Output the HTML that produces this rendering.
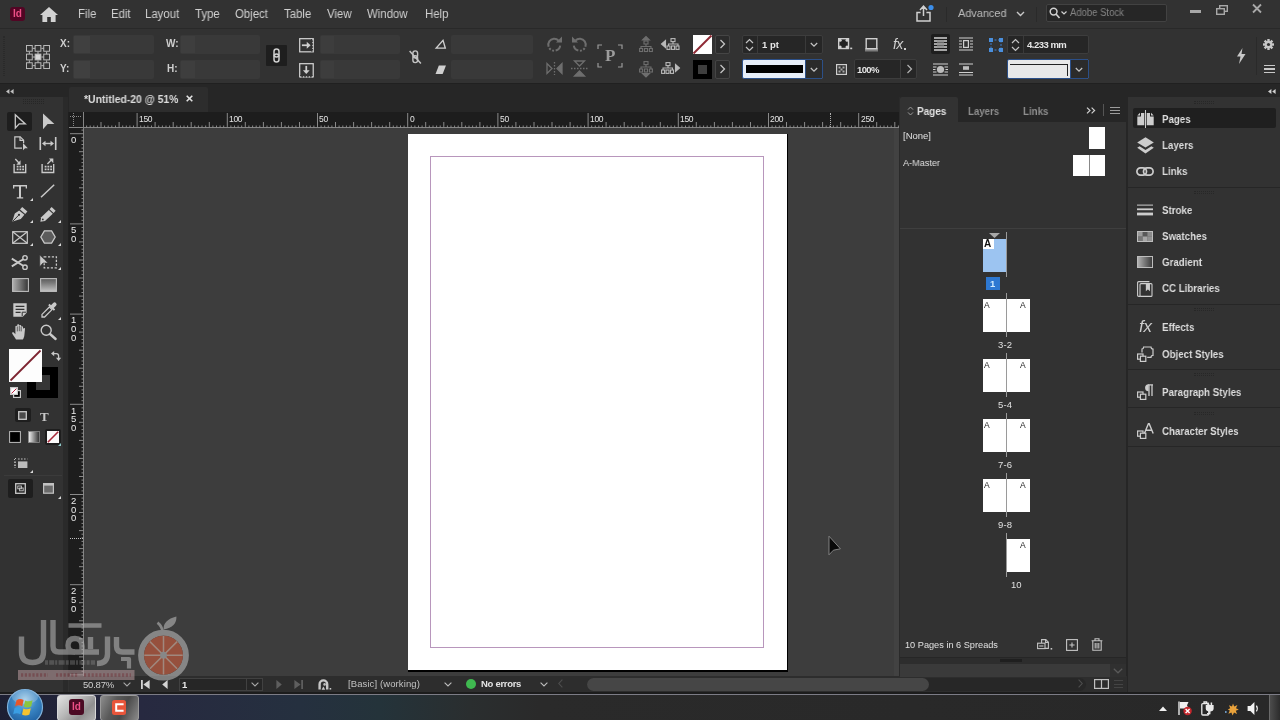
<!DOCTYPE html>
<html><head><meta charset="utf-8">
<style>
*{box-sizing:border-box;margin:0;padding:0}
html,body{width:1280px;height:720px;overflow:hidden;background:#323232;font-family:"Liberation Sans",sans-serif;color:#d6d6d6;font-size:12px}
.a{position:absolute}
.t{position:absolute;white-space:nowrap;line-height:1;will-change:transform}
svg{position:absolute;overflow:visible}
#menubar{left:0;top:0;width:1280px;height:28px;background:#323232}
#menubar .t{font-size:12px;top:8px;color:#d0d0d0;transform:scaleX(.95);transform-origin:0 0}
#ctrl{left:0;top:28px;width:1280px;height:55px;background:#323232}
.fld{position:absolute;background:#393939;border-radius:2px}
.dfld{position:absolute;background:#262626;border:1px solid #3d3d3d;border-radius:2px}
#tabrow{left:0;top:83px;width:1280px;height:29px;background:#262626;border-top:1px solid #202020}
#paste{left:84px;top:128px;width:816px;height:549px;background:#3d3d3d}
#hruler{left:84px;top:112px;width:815px;overflow:hidden;height:16px;background:#1d1d1d}
#vruler{left:69px;top:112px;width:15px;height:565px;background:#1d1d1d}
#toolbox{left:0;top:97px;width:63px;height:598px;background:#323232}
#pagespanel{left:900px;top:97px;width:226px;height:567px;background:#323232}
#dock{left:1128px;top:97px;width:152px;height:598px;background:#323232}
#dock .t{font-size:11.5px;font-weight:bold;color:#dcdcdc;left:34px;transform:scaleX(.845);transform-origin:0 0}
#status{left:69px;top:676px;width:1058px;height:17px;background:#2d2d2d}
#taskbar{left:0;top:695px;width:1280px;height:25px;background:#272727}
</style></head><body>
<div id="menubar" class="a">
<div class="a" style="left:9.5px;top:6.5px;width:15px;height:14.5px;background:#520524;border-radius:3px"></div>
<div class="t" style="left:12.8px;top:9.2px;font-size:10px;font-weight:bold;color:#ee4f86;letter-spacing:0px;transform:none">Id</div>
<svg style="left:40px;top:7px" width="18" height="15" viewBox="0 0 18 15"><path d="M9 0 L18 8 L15.6 8 L15.6 15 L10.8 15 L10.8 10 L7.2 10 L7.2 15 L2.4 15 L2.4 8 L0 8 Z" fill="#d2d2d2"/></svg>
<div class="t" style="left:78px">File</div>
<div class="t" style="left:111px">Edit</div>
<div class="t" style="left:145px">Layout</div>
<div class="t" style="left:195px">Type</div>
<div class="t" style="left:235px">Object</div>
<div class="t" style="left:284px">Table</div>
<div class="t" style="left:327px">View</div>
<div class="t" style="left:367px">Window</div>
<div class="t" style="left:425px">Help</div>
<svg style="left:916px;top:4px" width="18" height="18" viewBox="0 0 18 18"><path d="M4.6 8.6 H1 V17 H14 V8.6 H10.4 M7.5 12 V2.6 M4 6 L7.5 2.2 L11 6" fill="none" stroke="#d0d0d0" stroke-width="1.5"/><circle cx="15" cy="3.5" r="2.6" fill="#3b8eea"/></svg>
<div class="a" style="left:946px;top:7px;width:1px;height:15px;background:#2a2a2a"></div><div class="a" style="left:1036px;top:7px;width:1px;height:15px;background:#2a2a2a"></div><div class="t" style="left:958px;color:#bdbdbd;font-size:11.5px">Advanced</div>
<svg style="left:1016px;top:11px" width="9" height="6" viewBox="0 0 9 6"><path d="M1 1 L4.5 4.5 L8 1" fill="none" stroke="#c8c8c8" stroke-width="1.4"/></svg>
<div class="a" style="left:1046px;top:4px;width:121px;height:18px;background:#262626;border:1px solid #424242;border-radius:2px"></div>
<svg style="left:1049px;top:7px" width="20" height="12" viewBox="0 0 20 12"><circle cx="4.6" cy="4.6" r="3.4" fill="none" stroke="#d0d0d0" stroke-width="1.5"/><path d="M7 7 L10.5 11" stroke="#d0d0d0" stroke-width="1.7"/><path d="M12.5 4.5 L15 7 L17.5 4.5" fill="none" stroke="#d0d0d0" stroke-width="1.2"/></svg>
<div class="t" style="left:1070px;top:8px;font-size:10px;color:#858585">Adobe Stock</div>
<div class="a" style="left:1190px;top:10px;width:11px;height:3px;background:#a8a8a8"></div>
<svg style="left:1216px;top:5px" width="12" height="10" viewBox="0 0 12 10"><rect x="3.7" y="0.7" width="7.6" height="5.6" fill="none" stroke="#a8a8a8" stroke-width="1.4"/><rect x="0.7" y="3.7" width="7.6" height="5.6" fill="#323232" stroke="#a8a8a8" stroke-width="1.4"/></svg>
<svg style="left:1252px;top:4px" width="10" height="9" viewBox="0 0 10 9"><path d="M1 0.5 L9 8.5 M9 0.5 L1 8.5" stroke="#a8a8a8" stroke-width="1.8"/></svg>
</div>
<div id="ctrl" class="a">
<div class="a" style="left:0;top:0;width:1280px;height:1px;background:#292929"></div>
<div class="a" style="left:3px;top:8px;width:2px;height:40px;border-left:1px dotted #2a2a2a;border-right:1px dotted #2a2a2a"></div>
<svg style="left:26px;top:16.8px" width="24" height="24" viewBox="0 0 25 25" fill="none" stroke="#bdbdbd" stroke-width="1">
<path d="M7 3.5H9.5M16 3.5H18.5M7 12.5H9.5M16 12.5H18.5M7 21.5H9.5M16 21.5H18.5M3.5 7V9.5M3.5 16V18.5M12.5 7V9.5M12.5 16V18.5M21.5 7V9.5M21.5 16V18.5"/>
<rect x="0.5" y="0.5" width="6" height="6"/><rect x="9.5" y="0.5" width="6" height="6"/><rect x="18.5" y="0.5" width="6" height="6"/>
<rect x="0.5" y="9.5" width="6" height="6"/><rect x="9.5" y="9.5" width="6" height="6" fill="#d8d8d8"/><rect x="18.5" y="9.5" width="6" height="6"/>
<rect x="0.5" y="18.5" width="6" height="6"/><rect x="9.5" y="18.5" width="6" height="6"/><rect x="18.5" y="18.5" width="6" height="6"/></svg>
<div class="t" style="left:60px;top:11px;font-size:10px;font-weight:bold;color:#cfcfcf">X:</div>
<div class="t" style="left:60px;top:36px;font-size:10px;font-weight:bold;color:#cfcfcf">Y:</div>
<div class="fld" style="left:73px;top:7px;width:81px;height:19px"></div>
<div class="fld" style="left:73px;top:32px;width:81px;height:18.5px"></div>
<div class="a" style="left:74px;top:8px;width:16px;height:17px;background:#404040"></div>
<div class="a" style="left:74px;top:33px;width:16px;height:16.5px;background:#404040"></div>
<div class="t" style="left:166px;top:11px;font-size:10px;font-weight:bold;color:#cfcfcf">W:</div>
<div class="t" style="left:167px;top:36px;font-size:10px;font-weight:bold;color:#cfcfcf">H:</div>
<div class="fld" style="left:180px;top:7px;width:80px;height:19px"></div>
<div class="fld" style="left:180px;top:32px;width:80px;height:18.5px"></div>
<div class="a" style="left:181px;top:8px;width:14px;height:17px;background:#3e3e3e"></div>
<div class="a" style="left:181px;top:33px;width:14px;height:16.5px;background:#3e3e3e"></div>
<div class="a" style="left:266px;top:17px;width:21px;height:21px;background:#1e1e1e;border-radius:1px"></div>
<svg style="left:272px;top:20px" width="9" height="15" viewBox="0 0 9 15" fill="none" stroke="#cfcfcf" stroke-width="1.5"><rect x="2" y="1" width="5" height="8" rx="2.5"/><rect x="2" y="6" width="5" height="8" rx="2.5"/></svg>
<svg style="left:299px;top:10px" width="15.5" height="14.5" viewBox="0 0 16 15" fill="none" stroke="#cfcfcf"><rect x="0.7" y="0.7" width="14" height="13.6" stroke-width="1.3"/><path d="M13.5 1V14" stroke="#323232" stroke-width="2"/><path d="M14.3 1V14" stroke-dasharray="1.5 1.5" stroke-width="1.2"/><path d="M3 7.5H10" stroke-width="1.8"/><path d="M8 4L12 7.5L8 11Z" fill="#cfcfcf" stroke="none"/></svg>
<svg style="left:299px;top:34.5px" width="15.5" height="14.5" viewBox="0 0 16 15" fill="none" stroke="#cfcfcf"><rect x="0.7" y="0.7" width="14" height="13.6" stroke-width="1.3"/><path d="M1 13.6H14" stroke="#323232" stroke-width="2"/><path d="M1 14.3H14.5" stroke-dasharray="1.5 1.5" stroke-width="1.2"/><path d="M7.5 3V9" stroke-width="1.8"/><path d="M4 7.5L7.5 11.5L11 7.5Z" fill="#cfcfcf" stroke="none"/></svg>
<div class="fld" style="left:320px;top:7px;width:80px;height:19px"></div>
<div class="fld" style="left:320px;top:32px;width:80px;height:18.5px"></div>
<div class="a" style="left:321px;top:8px;width:13px;height:17px;background:#3d3d3d"></div>
<div class="a" style="left:321px;top:33px;width:13px;height:16.5px;background:#3d3d3d"></div>
<svg style="left:408px;top:20.5px" width="14.5" height="16" viewBox="0 0 15 17" fill="none" stroke="#c4c4c4" stroke-width="1.5"><rect x="5" y="2" width="5" height="7.5" rx="2.5"/><rect x="5" y="7" width="5" height="7.5" rx="2.5"/><path d="M1.5 2L13.5 15.5" stroke-width="1.6"/></svg>
<svg style="left:435px;top:10.5px" width="11.5" height="10" viewBox="0 0 12 11" fill="none" stroke="#cfcfcf" stroke-width="1.5"><path d="M1 10H11L8.5 1.5Z" stroke-linejoin="miter"/></svg>
<svg style="left:435px;top:37px" width="11.5" height="9.5" viewBox="0 0 12 10"><path d="M0.5 9.5L4 0.5H11.5L8 9.5Z" fill="#cfcfcf"/></svg>
<div class="fld" style="left:451px;top:7px;width:82px;height:19px"></div>
<div class="fld" style="left:451px;top:32px;width:82px;height:18.5px"></div>
<!-- rotate / flip (disabled) -->
<svg style="left:546px;top:8px" width="17" height="16" viewBox="0 0 17 16" fill="none" stroke="#6e6e6e" stroke-width="2"><path d="M12.6 4.6A6 6 0 1 0 14.2 9.6" stroke-dasharray="16 1.6 2 1.6 2 1.6 20"/><path d="M10 6.5H16V0.5Z" fill="#6e6e6e" stroke="none"/></svg>
<svg style="left:571px;top:8px" width="17" height="16" viewBox="0 0 17 16" fill="none" stroke="#6e6e6e" stroke-width="2"><path d="M4.4 4.6A6 6 0 1 1 2.8 9.6" stroke-dasharray="16 1.6 2 1.6 2 1.6 20"/><path d="M7 6.5H1V0.5Z" fill="#6e6e6e" stroke="none"/></svg>
<svg style="left:546px;top:34px" width="17" height="13" viewBox="0 0 17 13" fill="none" stroke="#6e6e6e" stroke-width="1.3"><path d="M1 1.5V11.5L6 6.5Z"/><path d="M16 1.5V11.5L11 6.5Z" fill="#6e6e6e"/><path d="M8.5 0V13" stroke-dasharray="1.5 1.5"/></svg>
<svg style="left:571px;top:32px" width="17" height="17" viewBox="0 0 17 17" fill="none" stroke="#6e6e6e" stroke-width="1.3"><path d="M3.5 1H13.5L8.5 6Z"/><path d="M3.5 16H13.5L8.5 11Z" fill="#6e6e6e"/><path d="M0 8.5H17" stroke-dasharray="1.5 1.5"/></svg>
<!-- P box -->
<svg style="left:597px;top:16px" width="26" height="24" viewBox="0 0 26 24" fill="none" stroke="#9a9a9a" stroke-width="1.2"><path d="M1 5V1H5M21 1H25V5M25 19V23H21M5 23H1V19"/></svg>
<div class="t" style="left:605px;top:19px;font-family:'Liberation Serif',serif;font-size:17px;font-weight:bold;color:#9c9c9c">P</div>
<!-- select container/content -->
<svg style="left:639px;top:8px" width="14" height="16" viewBox="0 0 14 16" fill="none" stroke="#6e6e6e" stroke-width="1.1"><path d="M3.5 4L7 0.5L10.5 4Z" fill="#6e6e6e"/><rect x="5" y="5" width="4" height="3"/><path d="M7 8V10.5M2 12.5V10.5H12V12.5"/><rect x="0.6" y="12.5" width="3" height="3"/><rect x="5.5" y="12.5" width="3" height="3"/><rect x="10.4" y="12.5" width="3" height="3"/></svg>
<svg style="left:639px;top:33px" width="14" height="17" viewBox="0 0 14 17" fill="none" stroke="#6e6e6e" stroke-width="1.1"><rect x="5" y="0.6" width="4" height="3"/><path d="M7 3.6V6M2 8V6H12V8"/><rect x="0.6" y="8" width="3" height="3"/><rect x="5.5" y="8" width="3" height="3"/><rect x="10.4" y="8" width="3" height="3"/><path d="M3.5 12.5L7 16L10.5 12.5Z" fill="#6e6e6e"/></svg>
<svg style="left:661px;top:10px" width="19" height="13" viewBox="0 0 19 13" fill="none" stroke="#b8b8b8" stroke-width="1.1"><path d="M4.5 2.5V9.5L0.5 6Z" fill="#b8b8b8"/><rect x="10" y="0.6" width="4" height="3"/><path d="M12 3.6V6M7.5 8V6H17V8"/><rect x="6" y="8" width="3" height="3.4"/><rect x="10.5" y="8" width="3" height="3.4"/><rect x="15" y="8" width="3" height="3.4"/></svg>
<svg style="left:661px;top:34px" width="19" height="13" viewBox="0 0 19 13" fill="none" stroke="#b8b8b8" stroke-width="1.1"><path d="M14.5 2.5V9.5L18.5 6Z" fill="#b8b8b8"/><rect x="5" y="0.6" width="4" height="3"/><path d="M7 3.6V6M2 8V6H11.5V8"/><rect x="0.6" y="8" width="3" height="3.4"/><rect x="5" y="8" width="3" height="3.4"/><rect x="9.5" y="8" width="3" height="3.4"/></svg>
<!-- fill / stroke swatches -->
<svg style="left:693px;top:7px" width="19" height="19" viewBox="0 0 19 19"><rect width="19" height="19" fill="#fff"/><path d="M0.5 18.5L18.5 0.5" stroke="#8f2a35" stroke-width="2"/></svg>
<div class="a" style="left:715px;top:7px;width:15px;height:19px;border:1px solid #454545;background:#2b2b2b;border-radius:2px"></div>
<svg style="left:719px;top:11px" width="7" height="10" viewBox="0 0 7 10"><path d="M1.5 1L5.5 5L1.5 9" fill="none" stroke="#c4c4c4" stroke-width="1.3"/></svg>
<div class="a" style="left:693px;top:32px;width:19px;height:18.5px;background:#000"></div>
<div class="a" style="left:698px;top:37px;width:9px;height:9px;background:#3e3e3e"></div>
<div class="a" style="left:715px;top:32px;width:15px;height:18.5px;border:1px solid #454545;background:#2b2b2b;border-radius:2px"></div>
<svg style="left:719px;top:36px" width="7" height="10" viewBox="0 0 7 10"><path d="M1.5 1L5.5 5L1.5 9" fill="none" stroke="#c4c4c4" stroke-width="1.3"/></svg>
<!-- stroke weight -->
<div class="dfld" style="left:742px;top:7px;width:81px;height:19px"></div>
<div class="a" style="left:757px;top:8px;width:1px;height:17px;background:#3a3a3a"></div>
<div class="a" style="left:805px;top:8px;width:1px;height:17px;background:#3a3a3a"></div>
<svg style="left:745px;top:10px" width="9" height="14" viewBox="0 0 9 14" fill="none" stroke="#c4c4c4" stroke-width="1.2"><path d="M1 5L4.5 1.5L8 5M1 9L4.5 12.5L8 9"/></svg>
<div class="t" style="left:761.5px;top:11.5px;font-size:9.5px;font-weight:bold;color:#e6e6e6">1 pt</div>
<svg style="left:810px;top:14px" width="8" height="6" viewBox="0 0 8 6"><path d="M0.8 1L4 4.2L7.2 1" fill="none" stroke="#c4c4c4" stroke-width="1.2"/></svg>
<!-- stroke type -->
<div class="a" style="left:742px;top:31px;width:81px;height:20px;background:#e6edf8;border:1px solid #2b4f88;border-radius:2px"></div>
<div class="a" style="left:746px;top:37px;width:57px;height:8px;background:#000"></div>
<div class="a" style="left:805px;top:32px;width:17px;height:18px;background:#2b2b2b;border-left:1px solid #2b4f88"></div>
<svg style="left:810px;top:39px" width="8" height="6" viewBox="0 0 8 6"><path d="M0.8 1L4 4.2L7.2 1" fill="none" stroke="#c4c4c4" stroke-width="1.2"/></svg>
<!-- corner opts, shadow, fx -->
<svg style="left:837.5px;top:10px" width="15" height="12" viewBox="0 0 15 12"><rect x="0.7" y="0.7" width="9.8" height="9.8" fill="#222" stroke="#cfcfcf" stroke-width="1.4"/><circle cx="2.2" cy="2.2" r="1.5" fill="#cfcfcf"/><circle cx="9" cy="2.2" r="1.5" fill="#cfcfcf"/><circle cx="2.2" cy="9" r="1.5" fill="#cfcfcf"/><circle cx="9" cy="9" r="1.5" fill="#cfcfcf"/><rect x="12.2" y="9.6" width="2" height="1.6" fill="#cfcfcf"/></svg>
<svg style="left:865px;top:10px" width="13" height="14" viewBox="0 0 13 14"><rect x="0" y="10" width="13" height="3.5" fill="#7d7d7d"/><rect x="1.2" y="0.7" width="10.6" height="10" fill="#323232" stroke="#cfcfcf" stroke-width="1.4"/></svg>
<div class="t" style="left:892.5px;top:8.5px;font-style:italic;font-size:14px;color:#cfcfcf;letter-spacing:-0.6px">fx</div>
<div class="a" style="left:904px;top:20px;width:2px;height:1.6px;background:#cfcfcf"></div>
<!-- opacity -->
<svg style="left:836px;top:36px" width="11" height="11" viewBox="0 0 11 11"><rect x="0.6" y="0.6" width="9.8" height="9.8" fill="none" stroke="#cfcfcf" stroke-width="1.2"/><rect x="2.5" y="2.5" width="2" height="2" fill="#aaa"/><rect x="6.5" y="2.5" width="2" height="2" fill="#aaa"/><rect x="4.5" y="4.5" width="2" height="2" fill="#aaa"/><rect x="2.5" y="6.5" width="2" height="2" fill="#aaa"/><rect x="6.5" y="6.5" width="2" height="2" fill="#aaa"/></svg>
<div class="dfld" style="left:854px;top:31px;width:63px;height:20px"></div>
<div class="a" style="left:900px;top:32px;width:1px;height:18px;background:#3d3d3d"></div>
<div class="t" style="left:857px;top:36.5px;font-size:9.5px;font-weight:bold;letter-spacing:-0.6px;color:#e6e6e6">100%</div>
<svg style="left:906px;top:36px" width="7" height="10" viewBox="0 0 7 10"><path d="M1.5 1L5.5 5L1.5 9" fill="none" stroke="#b4b4b4" stroke-width="1.2"/></svg>
<!-- text wrap -->
<div class="a" style="left:931px;top:6px;width:19px;height:20px;background:#1e1e1e;border-radius:2px"></div>
<svg style="left:934px;top:9px" width="13" height="14" viewBox="0 0 13 14" stroke="#d2d2d2" stroke-width="1.3"><path d="M0 1H13M0 13H13M0 4H13M0 7H13M0 10H13"/><rect x="3" y="3" width="7" height="8" fill="#8f8f8f" stroke="none" opacity="0.65"/></svg>
<svg style="left:959px;top:9px" width="14" height="14" viewBox="0 0 14 14" stroke="#cfcfcf" stroke-width="1.2" fill="none"><path d="M0 1H14M0 13H14M0 4H3M0 7H3M0 10H3M11 4H14M11 7H14M11 10H14"/><rect x="4.6" y="3.6" width="4.8" height="6.8"/></svg>
<svg style="left:933px;top:35px" width="15" height="13" viewBox="0 0 15 13" stroke="#cfcfcf" stroke-width="1.2" fill="none"><path d="M0 1H15M0 12H15M0 4H3.5M0 6.5H2.5M0 9H3.5M11.5 4H15M12.5 6.5H15M11.5 9H15"/><circle cx="7.5" cy="6.5" r="3.6" fill="#bdbdbd" stroke="none"/></svg>
<svg style="left:959px;top:35px" width="14" height="13" viewBox="0 0 14 13" stroke="#cfcfcf" stroke-width="1.2" fill="none"><path d="M0 1H14M0 9.5H14M0 12H14"/><rect x="4" y="3.2" width="6" height="3.6" fill="#bdbdbd" stroke="none"/></svg>
<!-- corner size -->
<svg style="left:989px;top:10px" width="14" height="14" viewBox="0 0 14 14"><path d="M2 2H12V12H2Z" fill="none" stroke="#3d7fce" stroke-width="1" stroke-dasharray="2 1.5"/><rect x="0" y="0" width="4" height="4" fill="#4a8fdd"/><rect x="10" y="0" width="4" height="4" fill="#4a8fdd"/><rect x="0" y="10" width="4" height="4" fill="#4a8fdd"/><rect x="10" y="10" width="4" height="4" fill="#4a8fdd"/></svg>
<div class="dfld" style="left:1007px;top:7px;width:82px;height:19px"></div>
<div class="a" style="left:1023px;top:8px;width:1px;height:17px;background:#3a3a3a"></div>
<svg style="left:1011px;top:10px" width="9" height="14" viewBox="0 0 9 14" fill="none" stroke="#c4c4c4" stroke-width="1.2"><path d="M1 5L4.5 1.5L8 5M1 9L4.5 12.5L8 9"/></svg>
<div class="t" style="left:1027px;top:12px;font-size:9.5px;font-weight:bold;letter-spacing:-0.5px;color:#e6e6e6">4.233 mm</div>
<div class="a" style="left:1007px;top:31px;width:82px;height:20px;background:#e8e8e8;border:1px solid #2b4f88;border-radius:2px"></div>
<div class="a" style="left:1010px;top:36px;width:58px;height:12px;border-top:1.5px solid #222;border-right:1.5px solid #222"></div>
<div class="a" style="left:1070px;top:32px;width:18px;height:18px;background:#2b2b2b;border-left:1px solid #2b4f88"></div>
<svg style="left:1075px;top:39px" width="8" height="6" viewBox="0 0 8 6"><path d="M0.8 1L4 4.2L7.2 1" fill="none" stroke="#c4c4c4" stroke-width="1.2"/></svg>
<!-- right -->
<svg style="left:1236px;top:20px" width="10" height="16" viewBox="0 0 10 16"><path d="M6.5 0L1 8.5H4.5L3 16L9.5 6H5.5Z" fill="#c8c8c8"/></svg>
<div class="a" style="left:1256px;top:9px;width:1px;height:38px;background:#2a2a2a"></div>
<svg style="left:1263px;top:11px" width="11" height="11" viewBox="-5.5 -5.5 11 11"><g fill="#c8c8c8"><circle r="3.7"/><rect x="-1.2" y="-5.5" width="2.4" height="11"/><rect x="-1.2" y="-5.5" width="2.4" height="11" transform="rotate(45)"/><rect x="-1.2" y="-5.5" width="2.4" height="11" transform="rotate(90)"/><rect x="-1.2" y="-5.5" width="2.4" height="11" transform="rotate(135)"/></g><circle r="1.6" fill="#323232"/></svg>
<div class="a" style="left:1264px;top:37px;width:11px;height:8px;border-top:1.5px solid #c8c8c8;border-bottom:1.5px solid #c8c8c8"></div>
<div class="a" style="left:1264px;top:40.3px;width:11px;height:1.5px;background:#c8c8c8"></div>
</div>
<div id="tabrow" class="a">
<svg style="left:5.5px;top:5px" width="8" height="5" viewBox="0 0 8 5"><path d="M3.4 0V5L0 2.5ZM7.6 0V5L4.2 2.5Z" fill="#c0c0c0"/></svg>
<div class="a" style="left:69px;top:3px;width:138.5px;height:25px;background:#2d2d2d;border-radius:2px 2px 0 0"></div>
<div class="t" style="left:83.5px;top:10px;font-size:10.5px;font-weight:bold;color:#dedede;transform:scaleX(.99);transform-origin:0 0">*Untitled-20 @ 51%</div>
<svg style="left:186px;top:11px" width="7" height="7" viewBox="0 0 7 7"><path d="M0.7 0.7L6.3 6.3M6.3 0.7L0.7 6.3" stroke="#e2e2e2" stroke-width="1.6"/></svg>
<svg style="left:1268px;top:5px" width="8" height="5" viewBox="0 0 8 5"><path d="M3.4 0V5L0 2.5ZM7.6 0V5L4.2 2.5Z" fill="#d0d0d0"/></svg>
</div>
<div id="paste" class="a">
<div class="a" style="left:324px;top:6px;width:380px;height:537.5px;background:#000"></div>
<div class="a" style="left:324px;top:6px;width:378.5px;height:535.5px;background:#fff"></div>
<div class="a" style="left:346px;top:27.5px;width:334px;height:492px;border:1px solid #b896bc"></div>
</div>
<div id="hruler" class="a"><svg style="left:0;top:0" width="815" height="16" viewBox="0 0 815 16"><path d="M0 15.5H815" stroke="#858585" stroke-width="1"/><path d="M2.6 13.5V16M6.2 13.5V16M9.8 13.5V16M13.4 13.5V16M17.0 10V16M20.6 13.5V16M24.2 13.5V16M27.8 13.5V16M31.5 13.5V16M35.1 10V16M38.7 13.5V16M42.3 13.5V16M45.9 13.5V16M49.5 13.5V16M53.1 1V16M56.7 13.5V16M60.3 13.5V16M63.9 13.5V16M67.5 13.5V16M71.1 10V16M74.7 13.5V16M78.4 13.5V16M82.0 13.5V16M85.6 13.5V16M89.2 10V16M92.8 13.5V16M96.4 13.5V16M100.0 13.5V16M103.6 13.5V16M107.2 10V16M110.8 13.5V16M114.4 13.5V16M118.0 13.5V16M121.7 13.5V16M125.3 10V16M128.9 13.5V16M132.5 13.5V16M136.1 13.5V16M139.7 13.5V16M143.3 1V16M146.9 13.5V16M150.5 13.5V16M154.1 13.5V16M157.7 13.5V16M161.3 10V16M164.9 13.5V16M168.6 13.5V16M172.2 13.5V16M175.8 13.5V16M179.4 10V16M183.0 13.5V16M186.6 13.5V16M190.2 13.5V16M193.8 13.5V16M197.4 10V16M201.0 13.5V16M204.6 13.5V16M208.2 13.5V16M211.9 13.5V16M215.5 10V16M219.1 13.5V16M222.7 13.5V16M226.3 13.5V16M229.9 13.5V16M233.5 1V16M237.1 13.5V16M240.7 13.5V16M244.3 13.5V16M247.9 13.5V16M251.5 10V16M255.1 13.5V16M258.8 13.5V16M262.4 13.5V16M266.0 13.5V16M269.6 10V16M273.2 13.5V16M276.8 13.5V16M280.4 13.5V16M284.0 13.5V16M287.6 10V16M291.2 13.5V16M294.8 13.5V16M298.4 13.5V16M302.1 13.5V16M305.7 10V16M309.3 13.5V16M312.9 13.5V16M316.5 13.5V16M320.1 13.5V16M323.7 1V16M327.3 13.5V16M330.9 13.5V16M334.5 13.5V16M338.1 13.5V16M341.7 10V16M345.3 13.5V16M349.0 13.5V16M352.6 13.5V16M356.2 13.5V16M359.8 10V16M363.4 13.5V16M367.0 13.5V16M370.6 13.5V16M374.2 13.5V16M377.8 10V16M381.4 13.5V16M385.0 13.5V16M388.6 13.5V16M392.3 13.5V16M395.9 10V16M399.5 13.5V16M403.1 13.5V16M406.7 13.5V16M410.3 13.5V16M413.9 1V16M417.5 13.5V16M421.1 13.5V16M424.7 13.5V16M428.3 13.5V16M431.9 10V16M435.5 13.5V16M439.2 13.5V16M442.8 13.5V16M446.4 13.5V16M450.0 10V16M453.6 13.5V16M457.2 13.5V16M460.8 13.5V16M464.4 13.5V16M468.0 10V16M471.6 13.5V16M475.2 13.5V16M478.8 13.5V16M482.5 13.5V16M486.1 10V16M489.7 13.5V16M493.3 13.5V16M496.9 13.5V16M500.5 13.5V16M504.1 1V16M507.7 13.5V16M511.3 13.5V16M514.9 13.5V16M518.5 13.5V16M522.1 10V16M525.7 13.5V16M529.4 13.5V16M533.0 13.5V16M536.6 13.5V16M540.2 10V16M543.8 13.5V16M547.4 13.5V16M551.0 13.5V16M554.6 13.5V16M558.2 10V16M561.8 13.5V16M565.4 13.5V16M569.0 13.5V16M572.7 13.5V16M576.3 10V16M579.9 13.5V16M583.5 13.5V16M587.1 13.5V16M590.7 13.5V16M594.3 1V16M597.9 13.5V16M601.5 13.5V16M605.1 13.5V16M608.7 13.5V16M612.3 10V16M615.9 13.5V16M619.6 13.5V16M623.2 13.5V16M626.8 13.5V16M630.4 10V16M634.0 13.5V16M637.6 13.5V16M641.2 13.5V16M644.8 13.5V16M648.4 10V16M652.0 13.5V16M655.6 13.5V16M659.2 13.5V16M662.9 13.5V16M666.5 10V16M670.1 13.5V16M673.7 13.5V16M677.3 13.5V16M680.9 13.5V16M684.5 1V16M688.1 13.5V16M691.7 13.5V16M695.3 13.5V16M698.9 13.5V16M702.5 10V16M706.1 13.5V16M709.8 13.5V16M713.4 13.5V16M717.0 13.5V16M720.6 10V16M724.2 13.5V16M727.8 13.5V16M731.4 13.5V16M735.0 13.5V16M738.6 10V16M742.2 13.5V16M745.8 13.5V16M749.4 13.5V16M753.1 13.5V16M756.7 10V16M760.3 13.5V16M763.9 13.5V16M767.5 13.5V16M771.1 13.5V16M774.7 1V16M778.3 13.5V16M781.9 13.5V16M785.5 13.5V16M789.1 13.5V16M792.7 10V16M796.3 13.5V16M800.0 13.5V16M803.6 13.5V16M807.2 13.5V16M810.8 10V16M814.4 13.5V16" stroke="#8a8a8a" stroke-width="1" fill="none"/></svg><div class="t" style="left:54.9px;top:3px;font-size:8.5px;letter-spacing:-0.3px;color:#e4e4e4">150</div><div class="t" style="left:145.1px;top:3px;font-size:8.5px;letter-spacing:-0.3px;color:#e4e4e4">100</div><div class="t" style="left:235.3px;top:3px;font-size:8.5px;letter-spacing:-0.3px;color:#e4e4e4">50</div><div class="t" style="left:325.5px;top:3px;font-size:8.5px;letter-spacing:-0.3px;color:#e4e4e4">0</div><div class="t" style="left:415.7px;top:3px;font-size:8.5px;letter-spacing:-0.3px;color:#e4e4e4">50</div><div class="t" style="left:505.9px;top:3px;font-size:8.5px;letter-spacing:-0.3px;color:#e4e4e4">100</div><div class="t" style="left:596.1px;top:3px;font-size:8.5px;letter-spacing:-0.3px;color:#e4e4e4">150</div><div class="t" style="left:686.3px;top:3px;font-size:8.5px;letter-spacing:-0.3px;color:#e4e4e4">200</div><div class="t" style="left:776.5px;top:3px;font-size:8.5px;letter-spacing:-0.3px;color:#e4e4e4">250</div></div><div class="a" style="left:829.5px;top:113px;width:1px;height:14px;border-left:1px dotted #b0b0b0"></div><div id="vruler" class="a"><svg style="left:0;top:0" width="15" height="565" viewBox="0 0 15 565"><path d="M14.5 0V565M0 15.5H15" stroke="#858585" stroke-width="1"/><path d="M12.5 18.1H15M1 21.7H15M12.5 25.3H15M12.5 28.9H15M12.5 32.5H15M12.5 36.1H15M10 39.7H15M12.5 43.3H15M12.5 47.0H15M12.5 50.6H15M12.5 54.2H15M10 57.8H15M12.5 61.4H15M12.5 65.0H15M12.5 68.6H15M12.5 72.2H15M10 75.8H15M12.5 79.4H15M12.5 83.0H15M12.5 86.6H15M12.5 90.3H15M10 93.9H15M12.5 97.5H15M12.5 101.1H15M12.5 104.7H15M12.5 108.3H15M1 111.9H15M12.5 115.5H15M12.5 119.1H15M12.5 122.7H15M12.5 126.3H15M10 129.9H15M12.5 133.5H15M12.5 137.2H15M12.5 140.8H15M12.5 144.4H15M10 148.0H15M12.5 151.6H15M12.5 155.2H15M12.5 158.8H15M12.5 162.4H15M10 166.0H15M12.5 169.6H15M12.5 173.2H15M12.5 176.8H15M12.5 180.5H15M10 184.1H15M12.5 187.7H15M12.5 191.3H15M12.5 194.9H15M12.5 198.5H15M1 202.1H15M12.5 205.7H15M12.5 209.3H15M12.5 212.9H15M12.5 216.5H15M10 220.1H15M12.5 223.7H15M12.5 227.4H15M12.5 231.0H15M12.5 234.6H15M10 238.2H15M12.5 241.8H15M12.5 245.4H15M12.5 249.0H15M12.5 252.6H15M10 256.2H15M12.5 259.8H15M12.5 263.4H15M12.5 267.0H15M12.5 270.7H15M10 274.3H15M12.5 277.9H15M12.5 281.5H15M12.5 285.1H15M12.5 288.7H15M1 292.3H15M12.5 295.9H15M12.5 299.5H15M12.5 303.1H15M12.5 306.7H15M10 310.3H15M12.5 313.9H15M12.5 317.6H15M12.5 321.2H15M12.5 324.8H15M10 328.4H15M12.5 332.0H15M12.5 335.6H15M12.5 339.2H15M12.5 342.8H15M10 346.4H15M12.5 350.0H15M12.5 353.6H15M12.5 357.2H15M12.5 360.9H15M10 364.5H15M12.5 368.1H15M12.5 371.7H15M12.5 375.3H15M12.5 378.9H15M1 382.5H15M12.5 386.1H15M12.5 389.7H15M12.5 393.3H15M12.5 396.9H15M10 400.5H15M12.5 404.1H15M12.5 407.8H15M12.5 411.4H15M12.5 415.0H15M10 418.6H15M12.5 422.2H15M12.5 425.8H15M12.5 429.4H15M12.5 433.0H15M10 436.6H15M12.5 440.2H15M12.5 443.8H15M12.5 447.4H15M12.5 451.1H15M10 454.7H15M12.5 458.3H15M12.5 461.9H15M12.5 465.5H15M12.5 469.1H15M1 472.7H15M12.5 476.3H15M12.5 479.9H15M12.5 483.5H15M12.5 487.1H15M10 490.7H15M12.5 494.3H15M12.5 498.0H15M12.5 501.6H15M12.5 505.2H15M10 508.8H15M12.5 512.4H15M12.5 516.0H15M12.5 519.6H15M12.5 523.2H15M10 526.8H15M12.5 530.4H15M12.5 534.0H15M12.5 537.6H15M12.5 541.3H15M10 544.9H15M12.5 548.5H15M12.5 552.1H15M12.5 555.7H15M12.5 559.3H15M1 562.9H15" stroke="#8a8a8a" stroke-width="1" fill="none"/><path d="M4.5 1V14M1 4.5H13" stroke="#8a8a8a" stroke-dasharray="1 1" stroke-width="1"/></svg><div class="t" style="left:2.3px;top:23.0px;font-size:9.5px;color:#ececec">0</div><div class="t" style="left:2.3px;top:113.2px;font-size:9.5px;color:#ececec">5</div><div class="t" style="left:2.3px;top:122.0px;font-size:9.5px;color:#ececec">0</div><div class="t" style="left:2.3px;top:203.4px;font-size:9.5px;color:#ececec">1</div><div class="t" style="left:2.3px;top:212.2px;font-size:9.5px;color:#ececec">0</div><div class="t" style="left:2.3px;top:221.0px;font-size:9.5px;color:#ececec">0</div><div class="t" style="left:2.3px;top:293.6px;font-size:9.5px;color:#ececec">1</div><div class="t" style="left:2.3px;top:302.4px;font-size:9.5px;color:#ececec">5</div><div class="t" style="left:2.3px;top:311.2px;font-size:9.5px;color:#ececec">0</div><div class="t" style="left:2.3px;top:383.8px;font-size:9.5px;color:#ececec">2</div><div class="t" style="left:2.3px;top:392.6px;font-size:9.5px;color:#ececec">0</div><div class="t" style="left:2.3px;top:401.4px;font-size:9.5px;color:#ececec">0</div><div class="t" style="left:2.3px;top:474.0px;font-size:9.5px;color:#ececec">2</div><div class="t" style="left:2.3px;top:482.8px;font-size:9.5px;color:#ececec">5</div><div class="t" style="left:2.3px;top:491.6px;font-size:9.5px;color:#ececec">0</div></div><div class="a" style="left:70px;top:537.5px;width:13px;height:1px;border-top:1px dotted #c0c0c0"></div><div id="toolbox" class="a">
<div class="a" style="left:23px;top:2px;width:21px;height:5px;border-top:1px dotted #262626;border-bottom:1px dotted #262626"></div><div class="a" style="left:23px;top:4px;width:21px;height:1px;border-top:1px dotted #262626"></div>
<!-- row1 -->
<div class="a" style="left:7px;top:14.5px;width:25px;height:19px;background:#1e1e1e;border-radius:2px"></div>
<svg style="left:14px;top:16px" width="13" height="17" viewBox="0 0 13 17"><path d="M1.3 1.8V15L5.2 10.9H11.3Z" fill="none" stroke="#c9c9c9" stroke-width="1.3" stroke-linejoin="miter"/></svg>
<svg style="left:42px;top:16px" width="13" height="17" viewBox="0 0 13 17"><path d="M1 0.5V16.2L5.6 11H12.4Z" fill="#c9c9c9"/></svg>
<!-- row2 page tool, gap tool -->
<svg style="left:14px;top:39px" width="14" height="15" viewBox="0 0 14 15" fill="none" stroke="#c9c9c9" stroke-width="1.2"><path d="M8 12.2H0.8V0.8H6.2L9.6 4.2V7"/><path d="M6 0.8V4.4H9.6"/><path d="M9 7V14.2L11 12.2H13.8Z" fill="#c9c9c9" stroke="none"/></svg>
<svg style="left:39px;top:40px" width="18" height="13" viewBox="0 0 18 13" fill="none" stroke="#c9c9c9"><path d="M1.3 0V13M16.7 0V13" stroke-width="1.6"/><path d="M5 6.5H13" stroke-width="1.4"/><path d="M3 6.5L6.5 3.8V9.2ZM15 6.5L11.5 3.8V9.2Z" fill="#c9c9c9" stroke="none"/></svg>
<!-- row3 content collector/placer -->
<svg style="left:12.6px;top:61px" width="13.8" height="16" viewBox="0 0 15 16" preserveAspectRatio="none" fill="none" stroke="#c9c9c9"><path d="M1.2 6V14.6H13.8V6" stroke-width="1.5"/><path d="M2.5 1L7 5.5" stroke-width="1.5"/><path d="M8.2 2.2V6.8H3.6Z" fill="#c9c9c9" stroke="none"/><path d="M4 8.6H6M7 8.6H9M10 8.6H12M4 11.4H6M7 11.4H9M10 11.4H12" stroke-width="1.8"/></svg>
<svg style="left:40.8px;top:61px" width="13.8" height="16" viewBox="0 0 15 16" preserveAspectRatio="none" fill="none" stroke="#c9c9c9"><path d="M1.2 6V14.6H13.8V6" stroke-width="1.5"/><path d="M7 6L12 1.2" stroke-width="1.5"/><path d="M8.6 0.4H13.4V5.2Z" fill="#c9c9c9" stroke="none"/><path d="M4 8.6H6M7 8.6H9M10 8.6H12M4 11.4H6M7 11.4H9M10 11.4H12" stroke-width="1.8"/></svg>
<!-- row4 T, line -->
<svg style="left:12.5px;top:87.5px" width="14" height="14" viewBox="0 0 14 14"><path d="M0 0H14V3.4H12.7V1.6H8V12.2H10.2V13.6H3.8V12.2H6V1.6H1.3V3.4H0Z" fill="#c9c9c9"/></svg>
<svg style="left:29.5px;top:101px" width="3" height="3" viewBox="0 0 3 3"><path d="M3 0V3H0Z" fill="#d8d8d8"/></svg>
<svg style="left:40px;top:87px" width="15" height="14" viewBox="0 0 15 14"><path d="M1 13.2L14.2 0.8" stroke="#c9c9c9" stroke-width="1.5"/></svg>
<!-- row5 pen, pencil -->
<svg style="left:12px;top:109.5px" width="16" height="15" viewBox="0 0 16 15"><g fill="#c9c9c9"><path d="M10.2 0L15.4 4.4L13.2 7L8 2.6Z"/><path d="M7.2 3.4L12.4 7.8L8.8 12L0.6 14.6L0.4 14L2.8 6.4Z"/></g><path d="M1 14L6.6 8.2" stroke="#323232" stroke-width="1"/><circle cx="7" cy="7.8" r="1.1" fill="#323232"/></svg>
<svg style="left:29.5px;top:123px" width="3" height="3" viewBox="0 0 3 3"><path d="M3 0V3H0Z" fill="#d8d8d8"/></svg>
<svg style="left:40px;top:109.5px" width="16" height="15" viewBox="0 0 16 15"><g fill="#c9c9c9"><path d="M11.6 0L15.6 3.8L13.6 6L9.6 2.2Z"/><path d="M8.8 3L12.8 6.8L5 14L0.4 14.8L1.2 10.2Z"/></g><circle cx="2.8" cy="12.4" r="0.9" fill="#323232"/></svg>
<svg style="left:57.5px;top:123px" width="3" height="3" viewBox="0 0 3 3"><path d="M3 0V3H0Z" fill="#d8d8d8"/></svg>
<!-- row6 rect frame, polygon -->
<svg style="left:12px;top:133.5px" width="16" height="13" viewBox="0 0 16 13" fill="none" stroke="#c9c9c9" stroke-width="1.2"><rect x="0.7" y="0.7" width="14.6" height="11.6"/><path d="M0.7 0.7L15.3 12.3M15.3 0.7L0.7 12.3"/></svg>
<svg style="left:29.5px;top:146px" width="3" height="3" viewBox="0 0 3 3"><path d="M3 0V3H0Z" fill="#d8d8d8"/></svg>
<svg style="left:40px;top:133px" width="16" height="14" viewBox="0 0 16 14"><path d="M0.8 7L4.4 0.8H11.6L15.2 7L11.6 13.2H4.4Z" fill="#5c5c5c" stroke="#c9c9c9" stroke-width="1.3"/></svg>
<svg style="left:57.5px;top:146px" width="3" height="3" viewBox="0 0 3 3"><path d="M3 0V3H0Z" fill="#d8d8d8"/></svg>
<!-- row7 scissors, free transform -->
<svg style="left:11px;top:157.5px" width="18" height="15" viewBox="0 0 18 15" fill="none" stroke="#c9c9c9"><circle cx="14" cy="2.8" r="2.2" stroke-width="1.4"/><circle cx="14" cy="12.2" r="2.2" stroke-width="1.4"/><path d="M12.2 4.2L0.8 11.4M12.2 10.8L0.8 3.6" stroke-width="1.9"/></svg>
<svg style="left:39px;top:157.5px" width="19" height="14" viewBox="0 0 19 14"><rect x="5.2" y="1.8" width="12.2" height="11" fill="none" stroke="#c9c9c9" stroke-width="1.3" stroke-dasharray="2.2 1.6"/><path d="M0.8 0V11.6L4 8H9Z" fill="#c9c9c9" stroke="#323232" stroke-width="0.6"/></svg>
<svg style="left:57.5px;top:170px" width="3" height="3" viewBox="0 0 3 3"><path d="M3 0V3H0Z" fill="#d8d8d8"/></svg>
<!-- row8 gradient, gradient feather -->
<svg style="left:11.5px;top:180.5px" width="17" height="14" viewBox="0 0 17 14"><defs><linearGradient id="g1" x1="0" x2="1" y1="0" y2="0"><stop offset="0" stop-color="#b0b0b0"/><stop offset="1" stop-color="#353535"/></linearGradient><linearGradient id="g2" x1="0" x2="0" y1="0" y2="1"><stop offset="0" stop-color="#5a5a5a"/><stop offset="0.35" stop-color="#7a7a7a"/><stop offset="1" stop-color="#c2c2c2"/></linearGradient></defs><rect x="0.6" y="0.6" width="15.8" height="12.8" fill="url(#g1)" stroke="#bdbdbd" stroke-width="1.1"/></svg>
<svg style="left:39.5px;top:180.5px" width="17" height="14" viewBox="0 0 17 14"><rect x="0.6" y="0.6" width="15.8" height="12.8" fill="url(#g2)" stroke="#bdbdbd" stroke-width="1.1"/></svg>
<!-- row9 note, eyedropper -->
<svg style="left:12.5px;top:206px" width="14" height="14" viewBox="0 0 14 14"><path d="M0.3 0.3H13.7V9.8L9.8 13.7H0.3Z" fill="#c9c9c9"/><path d="M2.6 3.4H11.4M2.6 6.4H11.4M2.6 9.4H7.6" stroke="#323232" stroke-width="1.4"/><path d="M9.2 13.2V9.2H13.2" fill="none" stroke="#323232" stroke-width="1"/></svg>
<svg style="left:39.5px;top:205px" width="17" height="17" viewBox="0 0 17 17"><path d="M9.4 5L12 7.6L4.6 15H2V12.4Z" fill="none" stroke="#c9c9c9" stroke-width="1.3"/><path d="M8.2 3.2L9.6 1.8L11 3.2L13.2 1A1.9 1.9 0 0 1 16 3.8L13.8 6L15.2 7.4L13.8 8.8Z" fill="#c9c9c9"/></svg>
<svg style="left:57.5px;top:220px" width="3" height="3" viewBox="0 0 3 3"><path d="M3 0V3H0Z" fill="#d8d8d8"/></svg>
<!-- row10 hand, zoom -->
<svg style="left:12px;top:227px" width="15" height="16" viewBox="0 0 15 16"><path d="M4 15.6C3 13.6 1.2 11.8 0.2 9.6C-0.2 8.4 1 7.8 1.8 8.6L3.4 10.2V2.6C3.4 1.4 5.2 1.4 5.2 2.6V1.2C5.2 0 7.2 0 7.2 1.2V1.8C7.2 0.6 9.2 0.6 9.2 1.8V3C9.2 1.9 11 1.9 11 3V5.2L11.2 4.6C11.6 3.6 13.2 3.8 13 5L12.4 11C12.2 13 11.6 14.4 10.8 15.6Z" fill="#c9c9c9"/><path d="M5.3 2.6V7.4M7.3 1.8V7.2M9.2 3V7.4" stroke="#323232" stroke-width="0.7"/></svg>
<svg style="left:39.5px;top:227px" width="17" height="16" viewBox="0 0 17 16" fill="none" stroke="#c9c9c9"><circle cx="6.2" cy="6.2" r="5" stroke-width="1.4"/><path d="M10 10L15.6 15" stroke-width="2.4" stroke-linecap="round"/></svg>
<!-- fill / stroke -->
<div class="a" style="left:27px;top:270px;width:31px;height:31px;background:#000"></div>
<div class="a" style="left:36px;top:278px;width:14px;height:14.5px;background:#363636"></div>
<svg style="left:9px;top:252px" width="33" height="33" viewBox="0 0 33 33"><rect width="33" height="33" fill="#fdfdfd"/><path d="M1.5 31.5L31.5 1.5" stroke="#7d2430" stroke-width="1.8"/></svg>
<svg style="left:51px;top:254px" width="10" height="10" viewBox="0 0 10 10" fill="none" stroke="#c8c8c8" stroke-width="1.3"><path d="M2.4 2.6H5.4Q7.6 2.6 7.6 5V7"/><path d="M0 2.6L3.2 0V5.2Z" fill="#c8c8c8" stroke="none"/><path d="M7.6 10L5 6.8H10.2Z" fill="#c8c8c8" stroke="none"/></svg>
<svg style="left:10px;top:290px" width="11" height="11" viewBox="0 0 11 11"><rect x="3.6" y="3.6" width="6.8" height="6.8" fill="#000" stroke="#c8c8c8" stroke-width="1.2"/><rect x="0.6" y="0.6" width="6.8" height="6.8" fill="#fff" stroke="#c8c8c8" stroke-width="1.2"/><path d="M1.6 6.4L6.4 1.6" stroke="#b24" stroke-width="1"/></svg>
<!-- formatting affects -->
<div class="a" style="left:14.5px;top:310.5px;width:16px;height:14px;background:#1e1e1e;border-radius:2px"></div>
<svg style="left:18px;top:313.5px" width="9" height="9" viewBox="0 0 9 9"><rect x="0.7" y="0.7" width="7.6" height="7.6" fill="#4a4a4a" stroke="#c8c8c8" stroke-width="1.3"/></svg>
<div class="t" style="left:39.5px;top:312.5px;font-family:'Liberation Serif',serif;font-size:13px;font-weight:bold;color:#c8c8c8">T</div>
<!-- apply color/gradient/none -->
<svg style="left:9px;top:334px" width="12" height="12" viewBox="0 0 12 12"><rect x="0.6" y="0.6" width="10.8" height="10.8" fill="#000" stroke="#bdbdbd" stroke-width="1"/></svg>
<svg style="left:28px;top:334px" width="12" height="12" viewBox="0 0 12 12"><defs><linearGradient id="g3" x1="0" x2="1"><stop offset="0" stop-color="#f4f4f4"/><stop offset="1" stop-color="#2c2c2c"/></linearGradient></defs><rect x="0.5" y="0.5" width="11" height="11" fill="url(#g3)" stroke="#8a8a8a" stroke-width="0.8"/></svg>
<div class="a" style="left:44.5px;top:332px;width:16px;height:16px;background:#1e1e1e;border-radius:2px"></div>
<svg style="left:46.5px;top:334px" width="12" height="12" viewBox="0 0 12 12"><rect width="12" height="12" fill="#fbfbfb"/><path d="M0.8 11.2L11.2 0.8" stroke="#a82a3a" stroke-width="1.6"/></svg>
<svg style="left:57.5px;top:345.5px" width="3" height="3" viewBox="0 0 3 3"><path d="M3 0V3H0Z" fill="#8fc9c9"/></svg>
<!-- view options -->
<svg style="left:13.5px;top:360.5px" width="14" height="11" viewBox="0 0 14 11"><rect x="4" y="3.4" width="9.4" height="6.6" fill="#bdbdbd"/><path d="M4 1H13.4" stroke="#bdbdbd" stroke-width="1.2" stroke-dasharray="1.6 1.4"/><path d="M1 3.4V10" stroke="#bdbdbd" stroke-width="1.6" stroke-dasharray="1.6 1.4"/><path d="M0 2L2 0" stroke="#bdbdbd" stroke-width="1"/></svg>
<svg style="left:29.5px;top:373px" width="3" height="3" viewBox="0 0 3 3"><path d="M3 0V3H0Z" fill="#d8d8d8"/></svg>
<div class="a" style="left:4px;top:377.5px;width:58px;height:1px;background:#3b3b3b"></div>
<!-- screen mode -->
<div class="a" style="left:7.5px;top:381.5px;width:25px;height:19.5px;background:#1e1e1e;border-radius:2px"></div>
<svg style="left:15px;top:386px" width="11" height="11" viewBox="0 0 11 11" fill="none" stroke="#c8c8c8"><rect x="0.7" y="0.7" width="9.6" height="9.6" stroke-width="1.3"/><rect x="2.8" y="3" width="3.6" height="2.8" stroke-width="0.9"/><rect x="4.6" y="5" width="3.6" height="2.8" stroke-width="0.9"/></svg>
<svg style="left:42.5px;top:386px" width="11" height="11" viewBox="0 0 11 11"><rect x="0.6" y="0.6" width="9.8" height="9.6" fill="#6a6a6a" stroke="#c2c2c2" stroke-width="1.2"/><rect x="0.6" y="0.6" width="9.8" height="2" fill="#c2c2c2"/></svg>
<svg style="left:57.5px;top:398.5px" width="3" height="3" viewBox="0 0 3 3"><path d="M3 0V3H0Z" fill="#d8d8d8"/></svg>
</div>
<div class="a" style="left:63px;top:97px;width:5px;height:598px;background:#2a2a2a"></div><div class="a" style="left:68px;top:112px;width:1px;height:565px;background:#1f1f1f"></div>
<div class="a" style="left:894px;top:128px;width:5px;height:549px;background:#424242"></div><div class="a" style="left:899px;top:97px;width:1.5px;height:580px;background:#2a2a2a"></div>
<div id="pagespanel" class="a">
<div class="a" style="left:0;top:0;width:226px;height:25px;background:#262626"></div>
<div class="a" style="left:0;top:0;width:58px;height:26px;background:#323232;border-radius:2px 2px 0 0"></div>
<svg style="left:7px;top:9px" width="7" height="10" viewBox="0 0 7 10" fill="none" stroke="#9a9a9a" stroke-width="1"><path d="M1 3.6L3.5 1L6 3.6M1 6.4L3.5 9L6 6.4"/></svg>
<div class="t" style="left:17px;top:8.8px;font-size:10.5px;font-weight:bold;color:#e2e2e2;transform:scaleX(.95);transform-origin:0 0">Pages</div>
<div class="t" style="left:68px;top:8.8px;font-size:10.5px;font-weight:bold;color:#8e8e8e;transform:scaleX(.92);transform-origin:0 0">Layers</div>
<div class="t" style="left:123px;top:8.8px;font-size:10.5px;font-weight:bold;color:#8e8e8e;transform:scaleX(.93);transform-origin:0 0">Links</div>
<svg style="left:186px;top:10px" width="10" height="7" viewBox="0 0 10 7" fill="none" stroke="#d0d0d0" stroke-width="1.2"><path d="M1 0.6L4 3.5L1 6.4M5.6 0.6L8.6 3.5L5.6 6.4"/></svg>
<div class="a" style="left:203px;top:7px;width:1px;height:12px;background:#555"></div>
<div class="a" style="left:209.5px;top:10px;width:10px;height:7px;border-top:1.3px solid #9c9c9c;border-bottom:1.3px solid #9c9c9c"></div>
<div class="a" style="left:209.5px;top:12.8px;width:10px;height:1.3px;background:#9c9c9c"></div>
<div class="t" style="left:3px;top:34px;font-size:9.5px;color:#e0e0e0">[None]</div>
<div class="a" style="left:189px;top:30px;width:16px;height:22px;background:#fff"></div>
<div class="t" style="left:3px;top:61px;font-size:9.5px;color:#e0e0e0;transform:scaleX(.96);transform-origin:0 0">A-Master</div>
<div class="a" style="left:173px;top:57.5px;width:32px;height:21.5px;background:#fff"></div>
<div class="a" style="left:188.5px;top:57.5px;width:1px;height:21.5px;background:#888"></div>
<div class="a" style="left:0;top:130.5px;width:226px;height:1px;background:#3f3f3f"></div>
<!-- page 1 -->
<svg style="left:88.6px;top:135.8px" width="11" height="5" viewBox="0 0 11 5"><path d="M0 0H11L5.5 5Z" fill="#a8a8a8"/></svg>
<div class="a" style="left:83px;top:141.5px;width:23px;height:33.5px;background:#9cc4f1"></div>
<div class="a" style="left:83px;top:141.5px;width:11px;height:10.5px;background:#fff"></div>
<div class="t" style="left:84px;top:142px;font-size:10px;font-weight:bold;color:#111">A</div>
<div class="a" style="left:105.5px;top:135px;width:1px;height:45px;background:#9a9a9a"></div>
<div class="a" style="left:86px;top:180px;width:14px;height:13px;background:#2d78d2"></div>
<div class="t" style="left:90px;top:182px;font-size:9.5px;font-weight:bold;color:#cfeaff">1</div>
<div class="a" style="left:83px;top:202px;width:47px;height:33px;background:#fff"></div><div class="a" style="left:105.5px;top:196px;width:1px;height:44px;background:#9a9a9a"></div><div class="t" style="left:84px;top:203.5px;font-size:8.5px;color:#1c1c1c">A</div><div class="t" style="left:120px;top:203.5px;font-size:8.5px;color:#1c1c1c">A</div><div class="t" style="left:97.5px;top:242.5px;font-size:9.5px;color:#e0e0e0;letter-spacing:0.2px">3-2</div><div class="a" style="left:83px;top:262px;width:47px;height:33px;background:#fff"></div><div class="a" style="left:105.5px;top:256px;width:1px;height:44px;background:#9a9a9a"></div><div class="t" style="left:84px;top:263.5px;font-size:8.5px;color:#1c1c1c">A</div><div class="t" style="left:120px;top:263.5px;font-size:8.5px;color:#1c1c1c">A</div><div class="t" style="left:97.5px;top:302.5px;font-size:9.5px;color:#e0e0e0;letter-spacing:0.2px">5-4</div><div class="a" style="left:83px;top:322px;width:47px;height:33px;background:#fff"></div><div class="a" style="left:105.5px;top:316px;width:1px;height:44px;background:#9a9a9a"></div><div class="t" style="left:84px;top:323.5px;font-size:8.5px;color:#1c1c1c">A</div><div class="t" style="left:120px;top:323.5px;font-size:8.5px;color:#1c1c1c">A</div><div class="t" style="left:97.5px;top:362.5px;font-size:9.5px;color:#e0e0e0;letter-spacing:0.2px">7-6</div><div class="a" style="left:83px;top:382px;width:47px;height:33px;background:#fff"></div><div class="a" style="left:105.5px;top:376px;width:1px;height:44px;background:#9a9a9a"></div><div class="t" style="left:84px;top:383.5px;font-size:8.5px;color:#1c1c1c">A</div><div class="t" style="left:120px;top:383.5px;font-size:8.5px;color:#1c1c1c">A</div><div class="t" style="left:97.5px;top:422.5px;font-size:9.5px;color:#e0e0e0;letter-spacing:0.2px">9-8</div><div class="a" style="left:106px;top:442px;width:24px;height:33px;background:#fff"></div><div class="a" style="left:105.5px;top:436px;width:1px;height:44px;background:#9a9a9a"></div><div class="t" style="left:120px;top:443.5px;font-size:8.5px;color:#1c1c1c">A</div><div class="t" style="left:110.5px;top:482.5px;font-size:9.5px;color:#e0e0e0">10</div>
<div class="t" style="left:5px;top:543.5px;font-size:9.2px;color:#e0e0e0">10 Pages in 6 Spreads</div>
<svg style="left:137px;top:542px" width="16" height="12" viewBox="0 0 16 12" fill="none" stroke="#c4c4c4" stroke-width="1.1"><path d="M4.6 4V0.6H8.8L11.4 3.2V9.4H8"/><path d="M8.6 0.6V3.4H11.4"/><rect x="0.6" y="4.2" width="7.4" height="5.4" fill="#323232"/><path d="M2.2 7H6.4"/><rect x="13.6" y="9" width="1.6" height="1.6" fill="#c4c4c4" stroke="none"/></svg>
<svg style="left:166px;top:542px" width="12" height="12" viewBox="0 0 12 12" fill="none" stroke="#c4c4c4" stroke-width="1.1"><rect x="0.6" y="0.6" width="10.8" height="10.8"/><path d="M6 3.4V8.6M3.4 6H8.6"/></svg>
<svg style="left:191px;top:541px" width="12" height="13" viewBox="0 0 12 13" fill="none" stroke="#c4c4c4" stroke-width="1.1"><path d="M0.6 2.8H11.4M4 2.6V0.8H8V2.6M1.8 3V12.2H10.2V3M4.2 5V10.4M6 5V10.4M7.8 5V10.4"/></svg>
<div class="a" style="left:0;top:559.5px;width:226px;height:7.5px;background:#2d2d2d;border-top:1px solid #262626"></div>
<div class="a" style="left:100px;top:562px;width:22px;height:2.5px;background:#1f1f1f"></div>
</div>
<div class="a" style="left:1126px;top:97px;width:2px;height:598px;background:#262626"></div>
<div id="dock" class="a">
<div class="a" style="left:66px;top:3.5px;width:20px;height:3px;border-top:1px dotted #272727;border-bottom:1px dotted #272727"></div>
<div class="a" style="left:5px;top:11px;width:143px;height:20px;background:#1f1f1f;border-radius:2px"></div>
<!-- pages icon -->
<svg style="left:9px;top:12.5px" width="17" height="18" viewBox="0 0 17 18"><path d="M0.3 6.6H4V3H7.3V15.2H0.3Z" fill="#cdcdcd"/><path d="M0.3 5.6L3 2.8V5.6Z" fill="#cdcdcd"/><path d="M16.7 6.6H13V3H9.7V15.2H16.7Z" fill="#cdcdcd"/><path d="M16.7 5.6L14 2.8V5.6Z" fill="#cdcdcd"/><path d="M8.5 0V18" stroke="#cdcdcd" stroke-width="1"/></svg>
<div class="t" style="top:17.2px">Pages</div>
<!-- layers icon -->
<svg style="left:9px;top:39.5px" width="17" height="17" viewBox="0 0 17 17"><path d="M8.5 0.2L16.8 5.4L8.5 10.6L0.2 5.4Z" fill="#cdcdcd"/><path d="M2.6 9.2L0.2 10.8L8.5 16.4L16.8 10.8L14.4 9.2L8.5 13Z" fill="#cdcdcd"/></svg>
<div class="t" style="top:43.2px">Layers</div>
<!-- links icon -->
<svg style="left:8px;top:69.5px" width="18" height="9" viewBox="0 0 18 9" fill="none" stroke="#cdcdcd" stroke-width="1.7"><rect x="0.9" y="0.9" width="9.6" height="7.2" rx="3.6"/><rect x="7.5" y="0.9" width="9.6" height="7.2" rx="3.6"/></svg>
<div class="t" style="top:69.2px">Links</div>
<div class="a" style="left:0;top:89.5px;width:152px;height:1px;background:#262626"></div>
<div class="a" style="left:66px;top:94px;width:20px;height:3px;border-top:1px dotted #272727;border-bottom:1px dotted #272727"></div>
<!-- stroke -->
<svg style="left:9px;top:106.5px" width="16" height="12" viewBox="0 0 16 12"><rect x="0" y="0.6" width="16" height="1" fill="#cdcdcd"/><rect x="0" y="4.4" width="16" height="1.8" fill="#cdcdcd"/><rect x="0" y="8.6" width="16" height="2.8" fill="#cdcdcd"/></svg>
<div class="t" style="top:107.7px">Stroke</div>
<!-- swatches -->
<svg style="left:9px;top:134px" width="16" height="11" viewBox="0 0 16 11"><rect x="0.5" y="0.5" width="15" height="10" fill="#6e6e6e" stroke="#bdbdbd" stroke-width="1"/><rect x="1" y="1" width="4.6" height="4.4" fill="#9a9a9a"/><rect x="5.8" y="1" width="4.6" height="4.4" fill="#585858"/><rect x="10.6" y="1" width="4.4" height="4.4" fill="#8a8a8a"/><rect x="1" y="5.6" width="4.6" height="4.4" fill="#767676"/><rect x="5.8" y="5.6" width="4.6" height="4.4" fill="#a6a6a6"/><rect x="10.6" y="5.6" width="4.4" height="4.4" fill="#909090"/></svg>
<div class="t" style="top:133.9px">Swatches</div>
<!-- gradient -->
<svg style="left:9px;top:159px" width="16" height="12" viewBox="0 0 16 12"><defs><linearGradient id="g4" x1="0" x2="1"><stop offset="0" stop-color="#b4b4b4"/><stop offset="1" stop-color="#383838"/></linearGradient></defs><rect x="0.5" y="0.5" width="15" height="11" fill="url(#g4)" stroke="#bdbdbd" stroke-width="1"/></svg>
<div class="t" style="top:160.2px">Gradient</div>
<!-- cc libraries -->
<svg style="left:9px;top:183.5px" width="16" height="16" viewBox="0 0 16 16" fill="none" stroke="#cdcdcd" stroke-width="1.1"><path d="M3 15.4H1.8Q0.6 15.4 0.6 14.2V1.8Q0.6 0.6 1.8 0.6H12.4"/><rect x="3" y="2.6" width="12" height="12.8" rx="1"/><path d="M9.4 2.8V9L10.9 7.6L12.4 9V2.8Z" fill="#cdcdcd"/></svg>
<div class="t" style="top:186.4px">CC Libraries</div>
<div class="a" style="left:0;top:206.5px;width:152px;height:1px;background:#262626"></div>
<div class="a" style="left:66px;top:211px;width:20px;height:3px;border-top:1px dotted #272727;border-bottom:1px dotted #272727"></div>
<!-- effects -->
<div class="t" style="left:10.5px !important;top:221px;font-style:italic;font-weight:normal !important;font-size:17px !important;color:#cdcdcd;letter-spacing:-0.3px;transform:none !important" id="fxd">fx</div>
<div class="t" style="top:225.4px">Effects</div>
<!-- object styles -->
<svg style="left:9px;top:249px" width="17" height="16" viewBox="0 0 17 16" fill="none" stroke="#cdcdcd" stroke-width="1.2"><path d="M5 6.6V3Q6.6 3 6.6 1H14Q14 3 16 3V9.4Q14 9.4 14 11.4H10.2"/><rect x="0.6" y="8" width="5.4" height="5.2"/><rect x="3.4" y="10.2" width="5.4" height="5.2" fill="#323232"/></svg>
<div class="t" style="top:251.5px">Object Styles</div>
<div class="a" style="left:0;top:271.5px;width:152px;height:1px;background:#262626"></div>
<div class="a" style="left:66px;top:276px;width:20px;height:3px;border-top:1px dotted #272727;border-bottom:1px dotted #272727"></div>
<!-- paragraph styles -->
<svg style="left:9px;top:287px" width="17" height="16" viewBox="0 0 17 16" fill="none" stroke="#cdcdcd" stroke-width="1.2"><path d="M12 0.8V12M15 0.8V12M16 0.8H11" stroke-width="1.3"/><path d="M11.6 0.3A3.5 3.5 0 0 0 11.6 7.3Z" fill="#cdcdcd" stroke="none"/><rect x="0.6" y="8" width="5.4" height="5.2"/><rect x="3.4" y="10.2" width="5.4" height="5.2" fill="#323232"/></svg>
<div class="t" style="top:290.0px">Paragraph Styles</div>
<div class="a" style="left:0;top:310px;width:152px;height:1px;background:#262626"></div>
<div class="a" style="left:66px;top:314.5px;width:20px;height:3px;border-top:1px dotted #272727;border-bottom:1px dotted #272727"></div>
<!-- character styles -->
<svg style="left:9px;top:326px" width="17" height="16" viewBox="0 0 17 16" fill="none" stroke="#cdcdcd" stroke-width="1.2"><path d="M7.4 10.4L11.4 0.8H12.2L16.2 10.4M8.8 7.2H14.8" stroke-width="1.4"/><rect x="0.6" y="8" width="5.4" height="5.2"/><rect x="3.4" y="10.2" width="5.4" height="5.2" fill="#323232"/></svg>
<div class="t" style="top:328.5px">Character Styles</div>
<div class="a" style="left:0;top:349px;width:152px;height:1px;background:#262626"></div>
</div>
<div id="status" class="a">
<div class="t" style="left:14px;top:4px;font-size:9.5px;color:#cfcfcf;letter-spacing:-0.2px">50.87%</div>
<svg style="left:53.5px;top:5.5px" width="8" height="5" viewBox="0 0 8 5"><path d="M0.6 0.6L4 4L7.4 0.6" fill="none" stroke="#a8a8a8" stroke-width="1.1"/></svg>
<svg style="left:72px;top:4px" width="9" height="9" viewBox="0 0 9 9"><rect x="0" y="0" width="1.8" height="9" fill="#d4d4d4"/><path d="M8.6 0V9L2.4 4.5Z" fill="#d4d4d4"/></svg>
<svg style="left:93px;top:4px" width="6" height="9" viewBox="0 0 6 9"><path d="M5.6 0V9L0.2 4.5Z" fill="#d4d4d4"/></svg>
<div class="a" style="left:109.5px;top:1.5px;width:84.5px;height:13px;background:#262626;border:1px solid #414141"></div>
<div class="a" style="left:177px;top:2.5px;width:1px;height:11px;background:#414141"></div>
<div class="t" style="left:113px;top:4px;font-size:9.5px;font-weight:bold;color:#e8e8e8">1</div>
<svg style="left:182px;top:6px" width="8" height="5" viewBox="0 0 8 5"><path d="M0.6 0.6L4 4L7.4 0.6" fill="none" stroke="#a8a8a8" stroke-width="1.1"/></svg>
<svg style="left:207px;top:4px" width="6" height="9" viewBox="0 0 6 9"><path d="M0.4 0V9L5.8 4.5Z" fill="#5e5e5e"/></svg>
<svg style="left:224.5px;top:4px" width="9" height="9" viewBox="0 0 9 9"><rect x="7.2" y="0" width="1.8" height="9" fill="#5e5e5e"/><path d="M0.4 0V9L6.6 4.5Z" fill="#5e5e5e"/></svg>
<svg style="left:248px;top:1.5px" width="15" height="13" viewBox="0 0 15 13"><path d="M2.6 11.6V6.2A3.8 3.8 0 0 1 10.2 6.2V11.6" fill="none" stroke="#c6c6c6" stroke-width="2.4"/><circle cx="7.6" cy="6.4" r="1.3" fill="#bdbdbd"/><path d="M4.6 11.8L6.4 8.4L8.2 11.8Z" fill="#c6c6c6"/><rect x="12.6" y="10" width="1.6" height="1.6" fill="#c6c6c6"/></svg>
<div class="t" style="left:278.5px;top:3px;font-size:9.5px;letter-spacing:0.1px;color:#c2c2c2">[Basic] (working)</div>
<svg style="left:374.5px;top:5.5px" width="8" height="5" viewBox="0 0 8 5"><path d="M0.6 0.6L4 4L7.4 0.6" fill="none" stroke="#bdbdbd" stroke-width="1.1"/></svg>
<div class="a" style="left:396.5px;top:2.5px;width:10px;height:10px;border-radius:5px;background:#3fb950"></div>
<div class="t" style="left:411.5px;top:3px;font-size:9.5px;font-weight:bold;color:#e4e4e4;letter-spacing:-0.3px">No errors</div>
<svg style="left:471px;top:5.5px" width="8" height="5" viewBox="0 0 8 5"><path d="M0.6 0.6L4 4L7.4 0.6" fill="none" stroke="#bdbdbd" stroke-width="1.1"/></svg>
<svg style="left:488.5px;top:3px" width="5" height="9" viewBox="0 0 5 9"><path d="M4.4 0.6L0.8 4.5L4.4 8.4" fill="none" stroke="#4e4e4e" stroke-width="1.1"/></svg>
<div class="a" style="left:497px;top:1.5px;width:499px;height:13.5px;background:#272727;border-radius:7px;margin-left:21px"></div>
<div class="a" style="left:518px;top:1.5px;width:342px;height:13.5px;background:#464646;border-radius:7px"></div>
<svg style="left:1009px;top:3px" width="5" height="9" viewBox="0 0 5 9"><path d="M0.6 0.6L4.2 4.5L0.6 8.4" fill="none" stroke="#4e4e4e" stroke-width="1.1"/></svg>
<svg style="left:1024.5px;top:3px" width="15" height="10" viewBox="0 0 15 10" fill="none" stroke="#c0c0c0" stroke-width="1.2"><rect x="0.6" y="0.6" width="13.8" height="8.8"/><path d="M7.5 0.6V9.4"/></svg>
<div class="a" style="left:1044.5px;top:4px;width:9px;height:8px;border-top:1px solid #444;border-bottom:1px solid #444"></div>
<div class="a" style="left:1044.5px;top:7.5px;width:9px;height:1px;background:#444"></div>
</div>
<!-- vertical scrollbar stub under pages panel -->
<div class="a" style="left:900px;top:664px;width:226px;height:13px;background:#3a3a3a"></div>
<div class="a" style="left:1110px;top:664px;width:16px;height:13px;background:#303030"></div>
<svg style="left:1113px;top:667.5px" width="10" height="6" viewBox="0 0 10 6"><path d="M0.8 0.8L5 4.8L9.2 0.8" fill="none" stroke="#5a5a5a" stroke-width="1.2"/></svg>
<div id="taskbar" class="a">
<div class="a" style="left:0;top:-3px;width:1280px;height:2px;background:#1c1c1c"></div><div class="a" style="left:0;top:-1px;width:1280px;height:1px;background:#7c7c86"></div><div class="a" style="left:0;top:0;width:1280px;height:25px;background:linear-gradient(90deg,#1d1f33 0,#272940 140px,#25303f 300px,#24333a 380px,#2a2e2f 470px,#2a2a2a 540px,#282828 1280px)"></div>
<!-- id button -->
<div class="a" style="left:57px;top:-0.5px;width:39px;height:26px;border-radius:3px;border:1px solid #d8d8d8;background:linear-gradient(135deg,#e2e2e2 0,#b9b9b9 40%,#8f8f8f 70%,#b0b0b0 100%)"></div>
<div class="a" style="left:68.5px;top:4px;width:15.5px;height:15.5px;border-radius:3px;background:#4a0a23"></div>
<div class="t" style="left:72.3px;top:7.3px;font-size:10px;font-weight:bold;color:#ee4f86">Id</div>
<!-- second button -->
<div class="a" style="left:100px;top:-0.5px;width:39px;height:26px;border-radius:3px;border:1px solid #9a9a9a;background:linear-gradient(115deg,#8d8d8d 0,#5a5a5a 35%,#4a4a4a 60%,#8a8a8a 100%)"></div>
<div class="a" style="left:112px;top:5px;width:14px;height:14.5px;border-radius:2.5px;background:#e8553a"></div>
<svg style="left:114.5px;top:8px" width="9" height="9" viewBox="0 0 9 9"><path d="M8.6 1.2H1.2V7.8H8.6" fill="none" stroke="#fff" stroke-width="2"/></svg>
<!-- systray -->
<svg style="left:1158.5px;top:10.5px" width="8" height="5" viewBox="0 0 8 5"><path d="M0 5H8L4 0.4Z" fill="#f0f0f0"/></svg>
<svg style="left:1178px;top:6px" width="15" height="15" viewBox="0 0 15 15"><path d="M1 0.5V14" stroke="#e8e8e8" stroke-width="1.4"/><path d="M2 1H10.5L9 4.2L10.5 7.6H2Z" fill="#efefef"/><circle cx="9.6" cy="10" r="4.2" fill="#c5262c"/><path d="M7.6 8L11.6 12M11.6 8L7.6 12" stroke="#fff" stroke-width="1.4"/></svg>
<svg style="left:1201px;top:5.5px" width="14" height="15" viewBox="0 0 14 15" fill="none" stroke="#eaeaea" stroke-width="1.3"><rect x="0.8" y="2.6" width="7" height="11.4" rx="1"/><path d="M3 2.6V1H5.6V2.6" /><path d="M7 1.4V4.4M10.4 1.4V4.4" stroke-width="1.5"/><path d="M5.4 4.6H12V7.4Q12 9.8 8.8 9.8Q5.4 9.8 5.4 7.4Z" fill="#eaeaea"/><path d="M8.8 9.8V12.6H6" /></svg>
<svg style="left:1224.5px;top:8px" width="14" height="13" viewBox="0 0 14 13"><path d="M8 0.4L9.2 3.4L12.4 2L11 5.2L13.8 6.6L10.8 7.8L12 11L9 9.6L7.6 12.6L6.4 9.6L3.4 10.8L4.8 7.6L2.8 6.4L5.2 5.2L4 2.2L7 3.4Z" fill="#e9a23b"/><rect x="0" y="8.2" width="1.6" height="1.6" fill="#7fb4e8"/></svg>
<svg style="left:1247px;top:5.5px" width="13" height="15" viewBox="0 0 13 15"><path d="M0.6 5H3.4L7.4 1V14L3.4 10H0.6Z" fill="#f2f2f2"/><path d="M9.4 4.6Q11.2 7.5 9.4 10.4" fill="none" stroke="#f2f2f2" stroke-width="1.2"/></svg>
<div class="a" style="left:1268.5px;top:0;width:11.5px;height:25px;background:linear-gradient(90deg,#4c4c4c,#2c2c2c);border-left:1px solid #6a6a6a"></div>
</div>
<!-- start orb -->
<svg style="left:6px;top:688px" width="38" height="32" viewBox="0 0 38 32"><defs><radialGradient id="orb" cx="0.5" cy="0.3" r="0.75"><stop offset="0" stop-color="#9ac8e6"/><stop offset="0.45" stop-color="#3a86c4"/><stop offset="1" stop-color="#1b5a9c"/></radialGradient></defs><circle cx="19" cy="19" r="17.5" fill="url(#orb)" stroke="#7fb2dc" stroke-width="1.2"/><ellipse cx="19" cy="9" rx="13" ry="7" fill="#ffffff" opacity="0.22"/>
<path d="M10.5 12.2Q14 10 17.6 12L16.2 18.2Q12.6 16.4 9 18.4Z" fill="#e8562a"/>
<path d="M19.2 12.4Q22.8 14.4 26.6 12.2L25.2 18.4Q21.4 20.4 17.8 18.6Z" fill="#8cc63f"/>
<path d="M8.6 20Q12.2 18 15.8 20L14.4 26.2Q10.8 24.2 7.2 26.2Z" fill="#3a9ee4"/>
<path d="M17.4 20.4Q21 22.4 24.8 20.2L23.4 26.4Q19.6 28.4 16 26.6Z" fill="#f5c330"/></svg>
<!-- watermark -->
<svg style="left:0;top:600px;opacity:0.58" width="220" height="95" viewBox="0 600 220 95">
<g fill="none" stroke="#b4b4b4" stroke-width="5.4" stroke-linecap="butt" stroke-linejoin="round">
<path d="M21.5 636.5V652Q21.5 662.5 32.5 662.5Q43.5 662.5 43.5 652V620"/>
<path d="M53 620V646Q53 652 59 652H99"/>
<path d="M82 652V646Q82 638.5 75 638.5Q68 638.5 68 645.5Q68 652 75 652"/>
<path d="M90.5 637V649"/>
<path d="M68.5 625.5H101.5" stroke-width="4.4"/>
<path d="M107.5 636.5V654Q107.5 663.5 97 663.5"/>
<path d="M116.5 637V646Q116.5 652 122.5 652H134.5"/>
<path d="M121 659H129V668.5" stroke-width="4.2"/>
</g>
<circle cx="75" cy="645.3" r="3" fill="#1a1a1a" opacity="0.55"/>
<path d="M45 662.5H95" stroke="#a8a8a8" stroke-width="4.5" stroke-dasharray="3 1.2 5 1 2 1.4 6 1.2" opacity="0.5"/>
<rect x="18" y="670" width="116.5" height="10" fill="#b4979a"/>
<path d="M21 675H48M56 675H78M84 675H131" stroke="#a0525a" stroke-width="3.4" stroke-dasharray="2.2 1.6" opacity="0.75"/>
<circle cx="163.5" cy="655.2" r="22.4" fill="none" stroke="#bcbcbc" stroke-width="6"/>
<circle cx="163.5" cy="655.2" r="19.5" fill="#d8603f"/>
<g stroke="#e8bfae" stroke-width="1.5"><path d="M163.5 636V674.5M144.3 655.2H182.7M149.9 641.6L177.1 668.8M177.1 641.6L149.9 668.8"/></g>
<circle cx="163.5" cy="655.2" r="3.4" fill="#bdbdbd"/>
<path d="M162.6 632Q162 626 157.5 622.6" fill="none" stroke="#bcbcbc" stroke-width="2.6"/>
<path d="M163.6 629.5Q163 620 176.4 616.6Q177 627 163.6 629.5Z" fill="#bcbcbc"/>
</svg>
<!-- cursor -->
<svg style="left:828px;top:534.5px" width="14" height="21" viewBox="0 0 14 21"><path d="M1 1.2V19.8L5.4 15.2L12.4 13.8Z" fill="#0a0a0a" stroke="#8c8c8c" stroke-width="0.9" stroke-linejoin="round"/></svg>
</body></html>
